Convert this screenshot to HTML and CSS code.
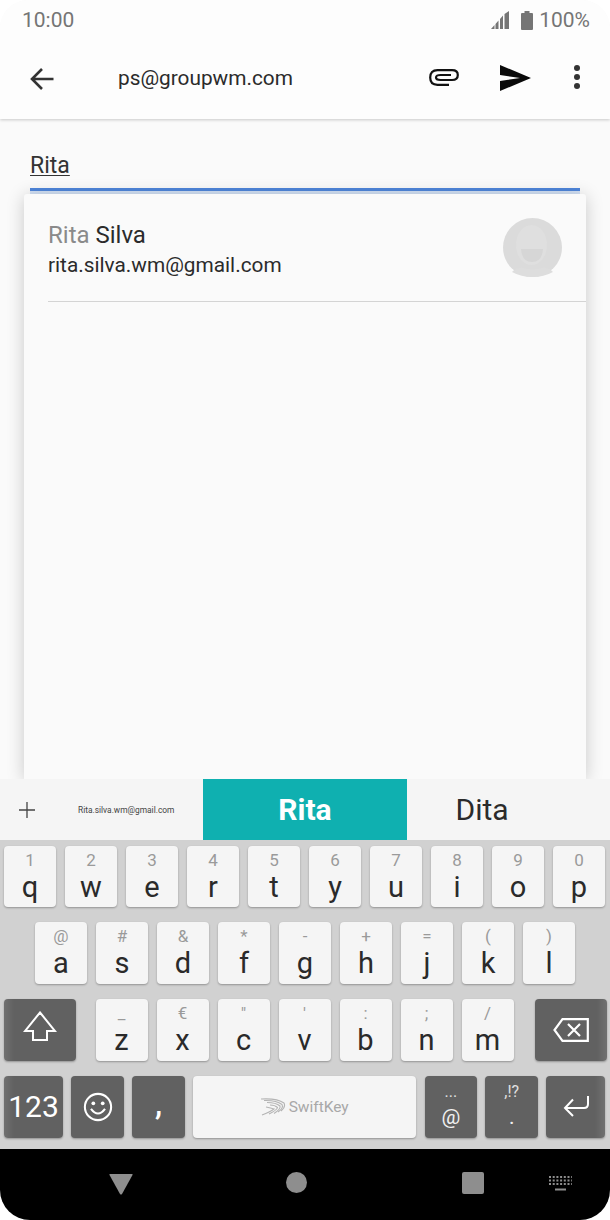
FILE: index.html
```html
<!DOCTYPE html>
<html lang="en">
<head>
    <meta charset="UTF-8" />
    <meta name="viewport" content="width=device-width, initial-scale=1" />
    <title>Compose</title>
    <link rel="stylesheet" href="styles.css">
</head>
<body>
<div class="screen">

    <!-- Status bar -->
    <div class="statusbar">
        <span class="clock">10:00</span>
        <div class="status-right">
            <svg class="signal" width="19" height="18" viewBox="0 0 19 18"><path d="M0 18 L3.500 14 V18Z M4.500 18 V13 L7.500 9.500 V18Z M9 18 V8 L12 4.500 V18Z M13.500 18 V3 L18 0 V18Z" fill="#757575"/></svg>
            <svg class="battery" width="12" height="19" viewBox="0 0 12 19"><path d="M3.500 0 H8.500 V2 H11 Q12 2 12 3 V18 Q12 19 11 19 H1 Q0 19 0 18 V3 Q0 2 1 2 H3.500Z" fill="#757575"/></svg>
            <span class="percent">100%</span>
        </div>
    </div>

    <!-- Toolbar -->
    <div class="toolbar">
        <svg class="back" width="24" height="24" viewBox="0 0 24 24"><path d="M23.500 12 H2 M12 2 L2 12 L12 22" fill="none" stroke="#333" stroke-width="2.600"/></svg>
        <span class="title">ps@groupwm.com</span>
        <svg class="clip" width="30" height="17" viewBox="0 0 30 17"><path d="M28.800 6 Q28.800 1.200 23 1.200 H8.500 Q1.200 1.200 1.200 8.500 Q1.200 15.800 8.500 15.800 H20 M28.800 6 Q28.800 11 23 11 H11.500 Q7 11 7 8.500 Q7 6 11.500 6 H22" fill="none" stroke="#111" stroke-width="2.200"/></svg>
        <svg class="send" width="31" height="26" viewBox="0 0 31 26"><path d="M0 0 L31 13 L0 26 V16 L20 13 L0 10Z" fill="#0a0a0a"/></svg>
        <svg class="dots" width="6" height="24" viewBox="0 0 6 24"><circle cx="3" cy="3" r="3" fill="#333"/><circle cx="3" cy="12" r="3" fill="#333"/><circle cx="3" cy="21" r="3" fill="#333"/></svg>
    </div>

    <!-- Recipient field and suggestion card -->
    <div class="content">
        <div class="field"><span class="typed">Rita</span></div>
        <div class="field-line"></div>
        <div class="card">
            <div class="contact">
                <div class="contact-text">
                    <div class="contact-name"><span class="match">Rita</span> Silva</div>
                    <div class="contact-mail">rita.silva.wm@gmail.com</div>
                </div>
                <svg class="avatar" width="59" height="59" viewBox="0 0 59 59">
                    <circle cx="29.500" cy="29.500" r="29.500" fill="#dbdbdb"/>
                    <ellipse cx="28.500" cy="27" rx="15.500" ry="20" fill="#dfdfdf"/>
                    <path d="M18 31 H40 Q39 44 29 44 Q19 44 18 31Z" fill="#d6d6d6"/>
                    <path d="M9 54 Q14 49 21 50 Q29.500 53 38 50 Q45 49 50 54 Q41 59 29.500 59 Q18 59 9 54Z" fill="#dddddd"/>
                </svg>
            </div>
        </div>
    </div>

    <!-- Suggestions -->
    <div class="suggestions">
        <div class="sug-plus"><svg width="16" height="16" viewBox="0 0 16 16"><path d="M8 0 V16 M0 8 H16" stroke="#444" stroke-width="1.300"/></svg></div>
        <div class="sug-mail">Rita.silva.wm@gmail.com</div>
        <div class="sug-main">Rita</div>
        <div class="sug-other">Dita</div>
    </div>

    <!-- Keyboard -->
    <div class="keyboard">
        <div class="row">
            <div class="key"><span class="hint">1</span><span class="letter">q</span></div>
            <div class="key"><span class="hint">2</span><span class="letter">w</span></div>
            <div class="key"><span class="hint">3</span><span class="letter">e</span></div>
            <div class="key"><span class="hint">4</span><span class="letter">r</span></div>
            <div class="key"><span class="hint">5</span><span class="letter">t</span></div>
            <div class="key"><span class="hint">6</span><span class="letter">y</span></div>
            <div class="key"><span class="hint">7</span><span class="letter">u</span></div>
            <div class="key"><span class="hint">8</span><span class="letter">i</span></div>
            <div class="key"><span class="hint">9</span><span class="letter">o</span></div>
            <div class="key"><span class="hint">0</span><span class="letter">p</span></div>
        </div>
        <div class="row row-center">
            <div class="key"><span class="hint">@</span><span class="letter">a</span></div>
            <div class="key"><span class="hint">#</span><span class="letter">s</span></div>
            <div class="key"><span class="hint">&amp;</span><span class="letter">d</span></div>
            <div class="key"><span class="hint">*</span><span class="letter">f</span></div>
            <div class="key"><span class="hint">-</span><span class="letter">g</span></div>
            <div class="key"><span class="hint">+</span><span class="letter">h</span></div>
            <div class="key"><span class="hint">=</span><span class="letter">j</span></div>
            <div class="key"><span class="hint">(</span><span class="letter">k</span></div>
            <div class="key"><span class="hint">)</span><span class="letter">l</span></div>
        </div>
        <div class="row row-center">
            <div class="key dark edge-left wide shift">
                <svg class="shift-icon" width="34" height="30" viewBox="0 0 34 30"><path d="M17 1.500 L32 20 H24 V29 H10 V20 H2Z" fill="none" stroke="#fff" stroke-width="2"/></svg>
            </div>
            <div class="key"><span class="hint">_</span><span class="letter">z</span></div>
            <div class="key"><span class="hint">€</span><span class="letter">x</span></div>
            <div class="key"><span class="hint">"</span><span class="letter">c</span></div>
            <div class="key"><span class="hint">'</span><span class="letter">v</span></div>
            <div class="key"><span class="hint">:</span><span class="letter">b</span></div>
            <div class="key"><span class="hint">;</span><span class="letter">n</span></div>
            <div class="key key-last"><span class="hint">/</span><span class="letter">m</span></div>
            <div class="key dark edge-right wide">
                <svg width="36" height="24" viewBox="0 0 36 24"><path d="M9.500 1.200 H34.800 V22.800 H9.500 L1.500 12Z" fill="none" stroke="#fff" stroke-width="2.200"/><path d="M15 6 L27 18 M27 6 L15 18" stroke="#fff" stroke-width="2.200"/></svg>
            </div>
        </div>
        <div class="row row-bottom">
            <div class="key dark edge-left num">123</div>
            <div class="key dark">
                <svg width="30" height="30" viewBox="0 0 32 32"><circle cx="16" cy="16" r="14" fill="none" stroke="#fff" stroke-width="2.200"/><circle cx="11" cy="12" r="2" fill="#fff"/><circle cx="21" cy="12" r="2" fill="#fff"/><path d="M8.500 18 Q16 28 23.500 18" fill="none" stroke="#fff" stroke-width="2.200"/></svg>
            </div>
            <div class="key dark comma">,</div>
            <div class="key space">
                <svg width="25" height="18" viewBox="0 0 25 18" fill="none" stroke="#b4b4b4" stroke-width="1.100"><path d="M0 1 Q16 0 23 5 Q25 9 20 13"/><path d="M3 2.500 Q15 2 21 6.500 Q23 10 17 14"/><path d="M6 4.500 Q15 4.500 19 8 Q20 11 13 15.500"/><path d="M9 7 Q14 7 16.500 9.500 Q16 12 8 16"/><path d="M5 9 Q10 10 13 11 Q9 14 1 17"/></svg>
                <span class="swift">SwiftKey</span>
            </div>
            <div class="key dark"><span class="hint light">...</span><span class="sym">@</span></div>
            <div class="key dark"><span class="hint light">,!?</span><span class="sym">.</span></div>
            <div class="key dark edge-right enter">
                <svg width="26" height="22" viewBox="0 0 26 22"><path d="M25 0 V8 Q25 12 21 12 H2 M10 3.500 L2 12 L10 20" fill="none" stroke="#fff" stroke-width="2"/></svg>
            </div>
        </div>
    </div>

    <!-- Navigation bar -->
    <div class="navbar">
        <svg class="nav-back" width="24" height="21" viewBox="0 0 24 21"><path d="M1 0 H23 Q24 0 23.500 1 L13 20 Q12 21 11 20 L0.500 1 Q0 0 1 0Z" fill="#8e8e8e"/></svg>
        <div class="nav-home"></div>
        <div class="nav-recent"></div>
        <svg class="nav-kbd" width="23" height="15" viewBox="0 0 23 15"><path d="M0 1 H23 M0 4.500 H23 M0 8 H23" stroke="#8e8e8e" stroke-width="2" stroke-dasharray="2 1.700"/><path d="M6 13.500 H17" stroke="#8e8e8e" stroke-width="2"/></svg>
    </div>

</div>
</body>
</html>
```

FILE: styles.css
```css
* {
    box-sizing: border-box;
}

html, body {
    margin: 0;
    background: #fff;
}

body {
    font-family: Roboto, sans-serif;
    width: 610px;
    height: 1220px;
    overflow: hidden;
}

.screen {
    width: 610px;
    height: 1220px;
    display: flex;
    flex-direction: column;
    overflow: hidden;
    background: #fafafa;
    border-radius: 28px 28px 30px 30px;
}

.statusbar {
    height: 38px;
    flex: none;
    background: #fdfdfd;
    display: flex;
    justify-content: space-between;
    align-items: center;
    padding: 2px 20px 0 22px;
    color: #757575;
    font-size: 21px;
    position: relative;
    z-index: 3;
}

.status-right {
    display: flex;
    align-items: center;
}

.signal {
    margin-right: 11px;
}

.battery {
    margin-right: 6px;
}

.toolbar {
    height: 81px;
    flex: none;
    background: #fdfdfd;
    display: flex;
    align-items: center;
    padding-left: 30px;
    box-shadow: 0 1px 3px rgba(0, 0, 0, 0.2);
    position: relative;
    z-index: 2;
}

.title {
    font-size: 20.800px;
    color: #2b2b2b;
    margin-left: 64px;
    width: 311px;
    margin-top: -2px;
}

.clip {
    margin-top: -3px;
}

.send {
    margin-left: 41px;
    margin-top: -2px;
}

.dots {
    margin-left: 43px;
    margin-top: -3px;
}

.content {
    flex: 1;
    min-height: 0;
    display: flex;
    flex-direction: column;
}

.field {
    height: 69px;
    padding: 34px 0 0 30px;
    flex: none;
}

.typed {
    font-size: 23px;
    line-height: 26px;
    color: #333;
    text-decoration: underline;
    text-underline-offset: 2px;
    text-decoration-thickness: 1px;
}

.field-line {
    flex: none;
    height: 3px;
    margin: 0 30px;
    background: #4f86db;
    box-shadow: 0 3px 0 #d3e1f5;
}

.card {
    flex: 1;
    margin: 3px 24px 0;
    background: #fafafa;
    border-radius: 3px 3px 0 0;
    box-shadow: 0 2px 18px rgba(0, 0, 0, 0.2);
    position: relative;
}

.contact {
    height: 108px;
    margin-left: 24px;
    padding: 24px 24px 0 0;
    border-bottom: 1px solid #d4d4d4;
    display: flex;
    justify-content: space-between;
}

.contact-name {
    font-size: 24px;
    line-height: 30px;
    margin-top: 2px;
    color: #2b2b2b;
}

.match {
    color: #8a8a8a;
}

.contact-mail {
    font-size: 20.800px;
    line-height: 30px;
    color: #2b2b2b;
}

.suggestions {
    height: 61px;
    flex: none;
    background: #f5f5f5;
    display: flex;
    align-items: center;
    position: relative;
    z-index: 2;
}

.sug-plus {
    width: 54px;
    padding-left: 19px;
    display: flex;
}

.sug-mail {
    width: 149px;
    padding-left: 24px;
    font-size: 8.400px;
    white-space: nowrap;
    color: #444;
}

.sug-main {
    width: 204px;
    height: 100%;
    background: #0fb0b0;
    color: #fff;
    font-size: 30px;
    font-weight: 700;
    display: flex;
    align-items: center;
    justify-content: center;
}

.sug-other {
    flex: 1;
    text-align: center;
    font-size: 30px;
    color: #2b2b2b;
    margin-left: -53px;
}

.keyboard {
    height: 309px;
    flex: none;
    background: #d1d1d1;
    padding: 5.500px 4px 0;
    display: flex;
    flex-direction: column;
    gap: 15.400px;
}

.row {
    display: flex;
    height: 61.500px;
    gap: 9px;
    flex: none;
}

.row-center {
    justify-content: center;
}

.row-bottom {
    gap: 8.400px;
}

.key {
    width: 52px;
    flex: none;
    background: #f5f5f5;
    border-radius: 4px;
    box-shadow: 0 1px 2px rgba(0, 0, 0, 0.3);
    display: flex;
    flex-direction: column;
    align-items: center;
    justify-content: center;
}

.row-bottom .key {
    width: 52.500px;
}

.hint {
    height: 24px;
    padding-top: 5px;
    font-size: 17px;
    line-height: 19px;
    color: #9a9a9a;
}

.hint.light {
    color: #e0e0e0;
    font-size: 16px;
    height: 22px;
    padding-top: 3px;
}

.letter {
    height: 38px;
    font-size: 29px;
    line-height: 34px;
    color: #2a2a2a;
}

.sym {
    color: #f0f0f0;
    font-size: 21px;
    height: 34px;
    line-height: 32px;
}

.dark {
    background: #616161;
    color: #fff;
}

.edge-left {
    background: linear-gradient(90deg, #707070, #616161 10px);
}

.edge-right {
    background: linear-gradient(270deg, #707070, #616161 10px);
}

.wide {
    width: 72px;
}

.shift {
    margin-right: 11px;
}

.shift-icon {
    margin-top: -8px;
}

.key-last {
    margin-right: 12px;
}

.row-bottom .num,
.row-bottom .enter {
    width: 59px;
}

.num {
    font-size: 30px;
}

.comma {
    font-size: 32px;
    font-weight: 500;
    padding-bottom: 6px;
}

.row-bottom .space {
    width: 223px;
    flex-direction: row;
    gap: 3px;
}

.swift {
    font-size: 15.500px;
    color: #a8a8a8;
}

.navbar {
    height: 71px;
    flex: none;
    background: #000;
    position: relative;
}

.nav-back {
    position: absolute;
    left: 109px;
    top: 25px;
}

.nav-home {
    position: absolute;
    left: 286px;
    top: 23px;
    width: 21px;
    height: 21px;
    border-radius: 50%;
    background: #8e8e8e;
}

.nav-recent {
    position: absolute;
    left: 462px;
    top: 23px;
    width: 22px;
    height: 22px;
    border-radius: 2px;
    background: #8e8e8e;
}

.nav-kbd {
    position: absolute;
    left: 549px;
    top: 27px;
}
```
